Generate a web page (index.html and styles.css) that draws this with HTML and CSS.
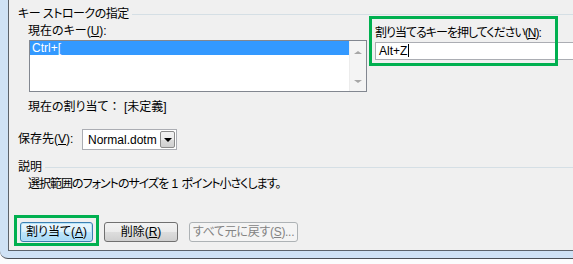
FILE: index.html
```html
<!DOCTYPE html>
<html lang="ja">
<head>
    <meta charset="UTF-8">
    <title>キーボードのユーザー設定</title>
    <link rel="stylesheet" href="styles.css">
</head>
<body>
    <div class="frame">
        <div class="dialog">
            <div class="group-head">
                <span class="tight">キー ストロークの指定</span>
                <i class="rule"></i>
            </div>

            <div class="keys">
                <div class="current">
                    <div class="label">現在のキー(<u>U</u>):</div>
                    <div class="listbox">
                        <div class="items">
                            <div class="item selected">Ctrl+[</div>
                        </div>
                        <div class="scroll">
                            <span class="arrow up"></span>
                            <span class="arrow down"></span>
                        </div>
                    </div>
                </div>
                <div class="newkey">
                    <div class="label tighter">割り当てるキーを押してください(<u>N</u>):</div>
                    <div class="textbox">Alt+Z<span class="caret"></span></div>
                </div>
            </div>

            <div class="assigned">現在の割り当て<span class="colon">：</span> [未定義]</div>

            <div class="save">
                <span class="save-label">保存先(<u>V</u>):</span>
                <div class="combo">
                    <span class="combo-text">Normal.dotm</span>
                    <span class="drop"><i></i></span>
                </div>
            </div>

            <div class="group-head desc-head">
                <span>説明</span>
                <i class="rule"></i>
            </div>
            <div class="desc">選択範囲のフォントのサイズを<span class="num"> 1 </span>ポイント小さくします。</div>

            <div class="buttons">
                <span class="mark"><button class="btn default">割り当て(<u>A</u>)</button></span>
                <button class="btn plain">削除(<u>R</u>)</button>
                <button class="btn plain wide" disabled>すべて元に戻す(<u>S</u>)...</button>
            </div>
        </div>
    </div>
</body>
</html>
```

FILE: styles.css
```css
body {
    margin: 0;
    width: 573px;
    height: 264px;
    overflow: hidden;
    background: #fbfcfd;
    font-family: "Liberation Sans", "Noto Sans CJK JP", sans-serif;
    font-size: 12px;
    font-feature-settings: "palt";
    color: #000;
    white-space: nowrap;
}

u {
    text-decoration: underline;
    text-underline-offset: 1px;
}

.tight {
    letter-spacing: -0.5px;
}

.tighter {
    letter-spacing: -1px;
}

/* window frame (aero style) */
.frame {
    height: 259px;
    box-sizing: border-box;
    padding: 0 0 7px 8px;
    background: #cfe2f5;
    border-bottom: 1px solid #4b4f55;
    border-bottom-left-radius: 8px;
}

.dialog {
    height: 251px;
    box-sizing: border-box;
    background: #f0f0f0;
    border-left: 1px solid #5c636b;
    border-bottom: 1px solid #5c636b;
}

.group-head {
    display: flex;
    align-items: center;
    padding: 7px 0 0 9px;
    line-height: 15px;
}

.rule {
    flex: 1;
    height: 1px;
    margin-left: 3px;
    background: #d5dfe5;
}

.keys {
    display: flex;
    align-items: flex-start;
}

.current {
    padding-left: 19px;
}

.label {
    line-height: 15px;
    margin: 2px 0 1px;
}

.listbox {
    display: flex;
    width: 338px;
    height: 52px;
    margin-left: 1px;
    box-sizing: border-box;
    border: 1px solid #828790;
    background: #fff;
}

.items {
    flex: 1;
}

.item {
    height: 14px;
    line-height: 14px;
    padding-left: 2px;
}

.item.selected {
    background: #3399ff;
    color: #fff;
}

.scroll {
    width: 17px;
    display: flex;
    flex-direction: column;
    justify-content: space-between;
    align-items: center;
    padding: 10px 0 8px;
    box-sizing: border-box;
    background: #f4f4f4;
    border-left: 1px solid #ececec;
}

.arrow {
    width: 0;
    height: 0;
    border-left: 4px solid transparent;
    border-right: 4px solid transparent;
}

.arrow.up {
    border-bottom: 3px solid #a7a7a7;
}

.arrow.down {
    border-top: 3px solid #a7a7a7;
}

.newkey {
    width: 183px;
    height: 44px;
    margin: -3px 0 0 5px;
    padding: 7px 0 0 3px;
    box-sizing: border-box;
    outline: 3px solid #00b050;
}

.newkey .label {
    margin: 0 0 1px;
}

.textbox {
    width: 200px;
    height: 18px;
    box-sizing: border-box;
    border: 1px solid #abadb3;
    background: #fff;
    line-height: 16px;
    padding-left: 3px;
}

.caret {
    display: inline-block;
    width: 1px;
    height: 13px;
    background: #000;
    vertical-align: -2px;
    margin-left: 1px;
}

.assigned {
    padding-left: 19px;
    margin-top: 8px;
    line-height: 15px;
}

.colon {
    font-feature-settings: normal;
}

.save {
    display: flex;
    align-items: center;
    margin-top: 14px;
    padding-left: 9px;
}

.save-label {
    width: 64px;
    line-height: 15px;
}

.combo {
    display: flex;
    align-items: center;
    width: 95px;
    height: 21px;
    box-sizing: border-box;
    border: 1px solid #abadb3;
    background: #fff;
    padding: 1px;
}

.combo-text {
    flex: 1;
    padding-left: 4px;
}

.drop {
    width: 15px;
    height: 17px;
    box-sizing: border-box;
    border: 1px solid #8b8b8b;
    border-radius: 2px;
    background: linear-gradient(#f2f2f2 0%, #ebebeb 50%, #dcdcdc 51%, #cfcfcf 100%);
    display: flex;
    align-items: center;
    justify-content: center;
}

.drop i {
    width: 0;
    height: 0;
    border-left: 4px solid transparent;
    border-right: 4px solid transparent;
    border-top: 4px solid #000;
}

.desc-head {
    padding-top: 10px;
}

.desc {
    padding-left: 19px;
    margin-top: 2px;
    line-height: 15px;
    letter-spacing: -1px;
}

.desc .num {
    letter-spacing: 0;
}

.buttons {
    display: flex;
    align-items: flex-start;
    gap: 5px;
    margin-top: 23px;
    padding-left: 5px;
}

/* green highlight around the assign button */
.mark {
    display: block;
    padding: 4px 3px 1px;
    border: 3px solid #00b050;
}

.btn {
    display: block;
    width: 73px;
    height: 20px;
    padding: 0;
    font: inherit;
    font-feature-settings: "palt";
    color: #000;
    line-height: 16px;
    border: 1px solid #707070;
    border-radius: 3px;
    background: linear-gradient(#f2f2f2 0%, #ebebeb 50%, #dddddd 51%, #cfcfcf 100%);
}

.btn.plain {
    width: 74px;
    margin-top: 7px;
}

.btn.default {
    border-color: #3c7fb1;
    box-shadow: inset 0 0 0 1px #b8e4f8;
    background: linear-gradient(#eaf6fd 0%, #d9f0fc 50%, #bee6fd 51%, #a7d9f5 100%);
}

.btn.wide {
    width: 109px;
    margin-left: 6px;
    letter-spacing: -0.3px;
}

.btn:disabled {
    color: #838383;
    border-color: #adb2b5;
    background: #f4f4f4;
}
```
